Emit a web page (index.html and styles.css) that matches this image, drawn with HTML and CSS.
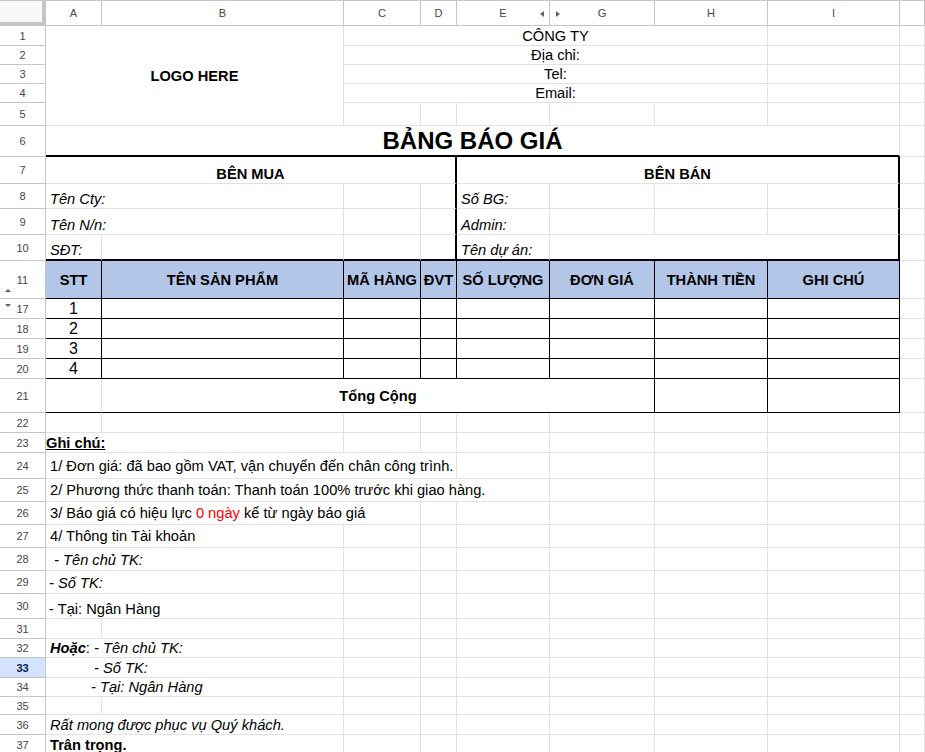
FILE: index.html
```html
<!DOCTYPE html>
<html lang="vi">
<head>
<meta charset="utf-8">
<title>Bảng báo giá</title>
<link rel="stylesheet" href="styles.css">
</head>
<body>
<div class="sheet">
  <!-- column headers -->
  <div class="corner"></div>
  <div class="ch">A</div>
  <div class="ch">B</div>
  <div class="ch">C</div>
  <div class="ch">D</div>
  <div class="ch has-mark">E<span class="tri-left"></span></div>
  <div class="ch has-mark">G<span class="tri-right"></span></div>
  <div class="ch">H</div>
  <div class="ch">I</div>
  <div class="ch"></div>

  <!-- row 1 -->
  <div class="rh">1</div>
  <div class="cell s2 r5 c b">LOGO HERE</div>
  <div class="cell s5 c bot">CÔNG TY</div>
  <div class="cell"></div>
  <div class="cell"></div>
  <!-- row 2 -->
  <div class="rh">2</div>
  <div class="cell s5 c bot">Địa chỉ:</div>
  <div class="cell"></div>
  <div class="cell"></div>
  <!-- row 3 -->
  <div class="rh">3</div>
  <div class="cell s5 c bot">Tel:</div>
  <div class="cell"></div>
  <div class="cell"></div>
  <!-- row 4 -->
  <div class="rh">4</div>
  <div class="cell s5 c bot">Email:</div>
  <div class="cell"></div>
  <div class="cell"></div>
  <!-- row 5 -->
  <div class="rh">5</div>
  <div class="cell"></div><div class="cell"></div><div class="cell"></div><div class="cell"></div><div class="cell"></div><div class="cell"></div>
  <div class="cell"></div>
  <!-- row 6 -->
  <div class="rh">6</div>
  <div class="cell s8 c b title bB2">BẢNG BÁO GIÁ</div>
  <div class="cell"></div>
  <!-- row 7 -->
  <div class="rh">7</div>
  <div class="cell s4 c b bot bR2">BÊN MUA</div>
  <div class="cell s4 c b bot bR2">BÊN BÁN</div>
  <div class="cell"></div>
  <!-- row 8 -->
  <div class="rh">8</div>
  <div class="cell s2 i bot">Tên Cty:</div>
  <div class="cell"></div>
  <div class="cell bR2"></div>
  <div class="cell i bot">Số BG:</div>
  <div class="cell"></div>
  <div class="cell"></div>
  <div class="cell bR2"></div>
  <div class="cell"></div>
  <!-- row 9 -->
  <div class="rh">9</div>
  <div class="cell s2 i bot">Tên N/n:</div>
  <div class="cell"></div>
  <div class="cell bR2"></div>
  <div class="cell i bot">Admin:</div>
  <div class="cell"></div>
  <div class="cell"></div>
  <div class="cell bR2"></div>
  <div class="cell"></div>
  <!-- row 10 -->
  <div class="rh">10</div>
  <div class="cell i bot bB2">SĐT:</div>
  <div class="cell bB2"></div>
  <div class="cell bB2"></div>
  <div class="cell bB2 bR2"></div>
  <div class="cell i bot bB2">Tên dự án:</div>
  <div class="cell s3 bB2 bR2"></div>
  <div class="cell"></div>
  <!-- row 11 -->
  <div class="rh has-mark">11<span class="tri-up"></span></div>
  <div class="cell hd">STT</div>
  <div class="cell hd">TÊN SẢN PHẨM</div>
  <div class="cell hd">MÃ HÀNG</div>
  <div class="cell hd">ĐVT</div>
  <div class="cell hd">SỐ LƯỢNG</div>
  <div class="cell hd">ĐƠN GIÁ</div>
  <div class="cell hd">THÀNH TIỀN</div>
  <div class="cell hd">GHI CHÚ</div>
  <div class="cell"></div>
  <!-- row 17 -->
  <div class="rh has-mark">17<span class="tri-down"></span></div>
  <div class="cell tb c num">1</div>
  <div class="cell tb"></div><div class="cell tb"></div><div class="cell tb"></div><div class="cell tb"></div><div class="cell tb"></div><div class="cell tb"></div><div class="cell tb"></div>
  <div class="cell"></div>
  <!-- row 18 -->
  <div class="rh">18</div>
  <div class="cell tb c num">2</div>
  <div class="cell tb"></div><div class="cell tb"></div><div class="cell tb"></div><div class="cell tb"></div><div class="cell tb"></div><div class="cell tb"></div><div class="cell tb"></div>
  <div class="cell"></div>
  <!-- row 19 -->
  <div class="rh">19</div>
  <div class="cell tb c num">3</div>
  <div class="cell tb"></div><div class="cell tb"></div><div class="cell tb"></div><div class="cell tb"></div><div class="cell tb"></div><div class="cell tb"></div><div class="cell tb"></div>
  <div class="cell"></div>
  <!-- row 20 -->
  <div class="rh">20</div>
  <div class="cell tb c num">4</div>
  <div class="cell tb"></div><div class="cell tb"></div><div class="cell tb"></div><div class="cell tb"></div><div class="cell tb"></div><div class="cell tb"></div><div class="cell tb"></div>
  <div class="cell"></div>
  <!-- row 21 -->
  <div class="rh">21</div>
  <div class="cell bB"></div>
  <div class="cell s5 tb c b">Tổng Cộng</div>
  <div class="cell tb"></div>
  <div class="cell tb"></div>
  <div class="cell"></div>
  <!-- row 22 -->
  <div class="rh">22</div>
  <div class="cell"></div><div class="cell"></div><div class="cell"></div><div class="cell"></div><div class="cell"></div><div class="cell"></div><div class="cell"></div><div class="cell"></div>
  <div class="cell"></div>
  <!-- row 23 -->
  <div class="rh">23</div>
  <div class="cell s2 b u flush">Ghi chú:</div>
  <div class="cell"></div><div class="cell"></div><div class="cell"></div><div class="cell"></div><div class="cell"></div><div class="cell"></div>
  <div class="cell"></div>
  <!-- row 24 -->
  <div class="rh">24</div>
  <div class="cell s4">1/ Đơn giá: đã bao gồm VAT, vận chuyển đến chân công trình.</div>
  <div class="cell"></div><div class="cell"></div><div class="cell"></div><div class="cell"></div>
  <div class="cell"></div>
  <!-- row 25 -->
  <div class="rh">25</div>
  <div class="cell s5">2/ Phương thức thanh toán: Thanh toán 100% trước khi giao hàng.</div>
  <div class="cell"></div><div class="cell"></div><div class="cell"></div>
  <div class="cell"></div>
  <!-- row 26 -->
  <div class="rh">26</div>
  <div class="cell s3">3/ Báo giá có hiệu lực&nbsp;<span class="red">0 ngày</span>&nbsp;kể từ ngày báo giá</div>
  <div class="cell"></div><div class="cell"></div><div class="cell"></div><div class="cell"></div><div class="cell"></div>
  <div class="cell"></div>
  <!-- row 27 -->
  <div class="rh">27</div>
  <div class="cell s2">4/ Thông tin Tài khoản</div>
  <div class="cell"></div><div class="cell"></div><div class="cell"></div><div class="cell"></div><div class="cell"></div><div class="cell"></div>
  <div class="cell"></div>
  <!-- row 28 -->
  <div class="rh">28</div>
  <div class="cell s2 i pre bot2"> - Tên chủ TK:</div>
  <div class="cell"></div><div class="cell"></div><div class="cell"></div><div class="cell"></div><div class="cell"></div><div class="cell"></div>
  <div class="cell"></div>
  <!-- row 29 -->
  <div class="rh">29</div>
  <div class="cell s2 i tight bot2">- Số TK:</div>
  <div class="cell"></div><div class="cell"></div><div class="cell"></div><div class="cell"></div><div class="cell"></div><div class="cell"></div>
  <div class="cell"></div>
  <!-- row 30 -->
  <div class="rh">30</div>
  <div class="cell s2 tight bot">- Tại: Ngân Hàng</div>
  <div class="cell"></div><div class="cell"></div><div class="cell"></div><div class="cell"></div><div class="cell"></div><div class="cell"></div>
  <div class="cell"></div>
  <!-- row 31 -->
  <div class="rh">31</div>
  <div class="cell"></div><div class="cell"></div><div class="cell"></div><div class="cell"></div><div class="cell"></div><div class="cell"></div><div class="cell"></div><div class="cell"></div>
  <div class="cell"></div>
  <!-- row 32 -->
  <div class="rh">32</div>
  <div class="cell s2"><b><i>Hoặc</i></b>:&nbsp;<i>- Tên chủ TK:</i></div>
  <div class="cell"></div><div class="cell"></div><div class="cell"></div><div class="cell"></div><div class="cell"></div><div class="cell"></div>
  <div class="cell"></div>
  <!-- row 33 -->
  <div class="rh sel">33</div>
  <div class="cell s2 i ind-a">- Số TK:</div>
  <div class="cell"></div><div class="cell"></div><div class="cell"></div><div class="cell"></div><div class="cell"></div><div class="cell"></div>
  <div class="cell"></div>
  <!-- row 34 -->
  <div class="rh">34</div>
  <div class="cell s2 i ind-b">- Tại: Ngân Hàng</div>
  <div class="cell"></div><div class="cell"></div><div class="cell"></div><div class="cell"></div><div class="cell"></div><div class="cell"></div>
  <div class="cell"></div>
  <!-- row 35 -->
  <div class="rh">35</div>
  <div class="cell"></div><div class="cell"></div><div class="cell"></div><div class="cell"></div><div class="cell"></div><div class="cell"></div><div class="cell"></div><div class="cell"></div>
  <div class="cell"></div>
  <!-- row 36 -->
  <div class="rh">36</div>
  <div class="cell s2 i">Rất mong được phục vụ Quý khách.</div>
  <div class="cell"></div><div class="cell"></div><div class="cell"></div><div class="cell"></div><div class="cell"></div><div class="cell"></div>
  <div class="cell"></div>
  <!-- row 37 -->
  <div class="rh">37</div>
  <div class="cell s2 b">Trân trọng.</div>
  <div class="cell"></div><div class="cell"></div><div class="cell"></div><div class="cell"></div><div class="cell"></div><div class="cell"></div>
  <div class="cell"></div>
</div>
</body>
</html>
```

FILE: styles.css
```css
html, body {
  margin: 0;
  padding: 0;
  background: #ffffff;
}

body {
  width: 925px;
  height: 752px;
  overflow: hidden;
  font-family: "Liberation Sans", Arial, sans-serif;
  font-size: 14.667px;
  color: #000000;
}

.sheet {
  display: grid;
  grid-template-columns: 46px 56px 242px 77px 36px 93px 105px 113px 132px 25px;
  grid-template-rows: 26px 20px 19px 19px 19px 23px 31px 27px 25px 26px 26px 38px 20px 20px 20px 20px 34px 20px 20px 26px 23px 23px 23px 23px 23px 25px 20px 19px 20px 19px 18px 20px 20px;
  width: 925px;
}

/* header cells */
.corner {
  background: #f8f9fa;
  border-right: 4px solid #c4c7c5;
  border-bottom: 4px solid #c4c7c5;
  border-top: 1px solid #c4c7c5;
  box-sizing: border-box;
}

.ch {
  position: relative;
  box-sizing: border-box;
  border-top: 1px solid #c4c7c5;
  border-right: 1px solid #c4c7c5;
  border-bottom: 1px solid #c4c7c5;
  display: flex;
  align-items: center;
  justify-content: center;
  font-size: 11px;
  color: #444746;
  background: #ffffff;
}

.rh {
  position: relative;
  box-sizing: border-box;
  border-right: 1px solid #c4c7c5;
  border-bottom: 1px solid #c4c7c5;
  display: flex;
  align-items: center;
  justify-content: center;
  font-size: 11px;
  color: #444746;
  background: #ffffff;
}

.rh.sel {
  background: #d3e3fd;
  color: #041e49;
  font-weight: bold;
}

.tri-left, .tri-right, .tri-up, .tri-down {
  position: absolute;
  width: 0;
  height: 0;
}

.tri-left {
  right: 5px;
  top: 10px;
  border-top: 3px solid transparent;
  border-bottom: 3px solid transparent;
  border-right: 4px solid #5f6368;
}

.tri-right {
  left: 6px;
  top: 10px;
  border-top: 3px solid transparent;
  border-bottom: 3px solid transparent;
  border-left: 4px solid #5f6368;
}

.tri-up {
  left: 5px;
  bottom: 6px;
  border-left: 3px solid transparent;
  border-right: 3px solid transparent;
  border-bottom: 3px solid #5f6368;
}

.tri-down {
  left: 5px;
  top: 5px;
  border-left: 3px solid transparent;
  border-right: 3px solid transparent;
  border-top: 3px solid #5f6368;
}

/* grid cells */
.cell {
  box-sizing: border-box;
  border-right: 1px solid #e2e2e3;
  border-bottom: 1px solid #e2e2e3;
  display: flex;
  align-items: center;
  padding: 0 4px;
  white-space: nowrap;
  min-width: 0;
}

.s2 { grid-column: span 2; }
.s3 { grid-column: span 3; }
.s4 { grid-column: span 4; }
.s5 { grid-column: span 5; }
.s8 { grid-column: span 8; }
.r5 { grid-row: span 5; }

.c { justify-content: center; }
.b { font-weight: bold; }
.i { font-style: italic; }
.u { text-decoration: underline; }
.red { color: #ff0000; }
.pre { white-space: pre; }
.flush { padding-left: 0; }
.tight { padding-left: 3px; }
.ind-a { padding-left: 48px; }
.ind-b { padding-left: 45px; }

/* bottom-aligned cells (spreadsheet default alignment) */
.bot {
  align-items: flex-end;
  padding-bottom: 1px;
}

.bot2 {
  align-items: flex-end;
  padding-bottom: 2px;
}

.title {
  font-size: 24px;
}

.num {
  font-size: 16px;
}

/* black table borders */
.bR2 { border-right: 2px solid #000000; }
.bB2 { border-bottom: 2px solid #000000; }
.bB { border-bottom: 1px solid #000000; }

.tb {
  border-right: 1px solid #000000;
  border-bottom: 1px solid #000000;
}

.hd {
  background: #b4c6e7;
  border-right: 1px solid #000000;
  border-bottom: 1px solid #000000;
  justify-content: center;
  font-weight: bold;
  padding: 0 2px;
}
```
